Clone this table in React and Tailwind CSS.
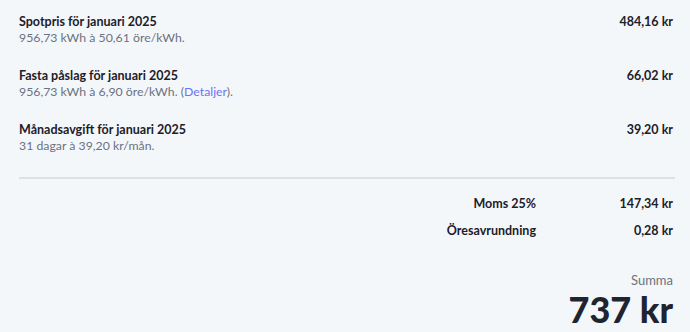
import React from 'react';

const items = [
  { title: 'Spotpris för januari 2025', sub: '956,73 kWh à 50,61 öre/kWh.', amount: '484,16 kr' },
  { title: 'Fasta påslag för januari 2025', sub: '956,73 kWh à 6,90 öre/kWh.', amount: '66,02 kr', link: true },
  { title: 'Månadsavgift för januari 2025', sub: '31 dagar à 39,20 kr/mån.', amount: '39,20 kr' },
];

const totals = [
  { label: 'Moms 25%', amount: '147,34 kr' },
  { label: 'Öresavrundning', amount: '0,28 kr' },
];

const App = () => {
  return (
    <div
      className="w-[690px] h-[332px] overflow-hidden bg-[#f4f7fa] pl-[19px] pr-[15px] pt-[14px] text-[12.5px] text-[#1b2029]"
      style={{ fontFamily: 'Lato, "Liberation Sans", sans-serif' }}
    >
      <div className="flex flex-col gap-[22px]">
        {items.map((item) => (
          <div key={item.title} className="flex justify-between">
            <div>
              <p className="leading-4 font-bold">{item.title}</p>
              <p className="leading-4 text-[12.3px] text-[#6b7280]">
                {item.sub}
                {item.link && (
                  <>
                    {' '}(<a href="#" className="text-[#6b73f5]">Detaljer</a>).
                  </>
                )}
              </p>
            </div>
            <p className="leading-4 font-bold pr-[2px]">{item.amount}</p>
          </div>
        ))}
      </div>

      <div className="mt-[23px] h-[2px] bg-[#dde1e6]" />

      <div className="mt-[17px] flex flex-col gap-[11px]">
        {totals.map((t) => (
          <div key={t.label} className="flex justify-end font-bold leading-4">
            <span>{t.label}</span>
            <span className="w-[139px] text-right pr-[2px]">{t.amount}</span>
          </div>
        ))}
      </div>

      <div className="mt-[33px] flex flex-col items-end pr-[2px]">
        <p className="text-[13px] leading-4 text-[#6b7280]">Summa</p>
        <p className="mt-[3px] text-[36px] leading-[36px] font-black text-[#1e2530]">737 kr</p>
      </div>
    </div>
  );
};

export default App;
